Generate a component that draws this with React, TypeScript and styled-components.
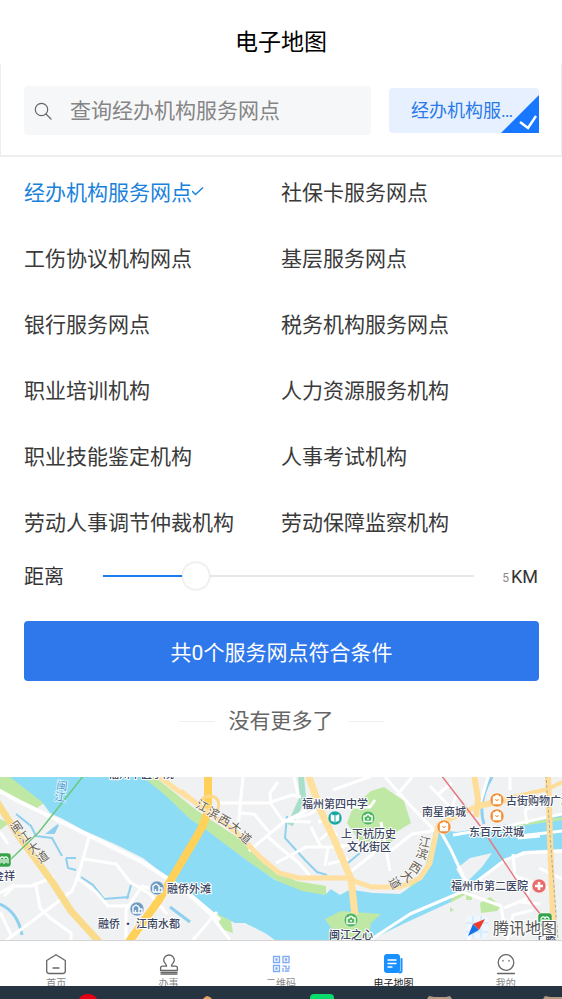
import React, { useState } from "react";
import styled, { createGlobalStyle } from "styled-components";

const GlobalStyle = createGlobalStyle`
  *, *::before, *::after { box-sizing: border-box; }
  body {
    margin: 0;
    background: #fff;
    color: #333;
    font-family: Roboto, "Noto Sans CJK SC", sans-serif;
  }
  button, input { font-family: inherit; }
`;

const Page = styled.div`
  display: flex;
  flex-direction: column;
  min-height: 100vh;
`;

const Title = styled.h1`
  margin: 0;
  padding-top: 21px;
  font-size: 23px;
  font-weight: 400;
  line-height: 43px;
  text-align: center;
  color: #000;
`;

const FilterBar = styled.form`
  display: flex;
  align-items: center;
  gap: 18px;
  padding: 22px 22px 20px 23px;
  border: solid #eee;
  border-width: 0 1px 2px;
`;

const SearchBox = styled.label`
  display: flex;
  flex: 1;
  align-items: center;
  gap: 18px;
  min-width: 0;
  padding: 0 10px;
  background: #f6f7f9;
  border-radius: 4px;
`;

const SearchInput = styled.input`
  flex: 1;
  min-width: 0;
  height: 49px;
  padding: 1px 0 0;
  border: 0;
  outline: 0;
  background: transparent;
  font-size: 21px;
  color: #333;
  &::placeholder { color: #858585; opacity: 1; }
`;

const TypeChip = styled.button`
  position: relative;
  width: 150px;
  height: 45px;
  padding: 0 22px;
  overflow: hidden;
  border: 0;
  border-radius: 4px 4px 0 4px;
  background: #e7f0fe;
  color: #2979e8;
  font-size: 18px;
  line-height: 45px;
  text-align: left;
`;

const ChipLabel = styled.span`
  display: block;
  overflow: hidden;
  white-space: nowrap;
  text-overflow: ellipsis;
`;

const ChipCorner = styled.svg`
  position: absolute;
  right: 0;
  bottom: 0;
  width: 38px;
  height: 38px;
`;

const TypeGrid = styled.div`
  display: grid;
  grid-template-columns: 1fr 1fr;
  padding: 1px 24px 1px;
`;

const TypeOption = styled.button<{ $active: boolean }>`
  display: flex;
  align-items: center;
  height: 66px;
  padding: 0;
  border: 0;
  background: none;
  font-size: 21px;
  white-space: nowrap;
  color: ${(p) => (p.$active ? "#1a82dc" : "#3a3a3a")};
`;

const DistanceRow = styled.div`
  display: flex;
  align-items: center;
  min-height: 42px;
  padding: 0 24px;
`;

const DistanceLabel = styled.label`
  flex: none;
  width: 79px;
  padding-bottom: 2px;
  font-size: 20px;
`;

const Track = styled.div`
  flex: 1;
  display: flex;
  height: 28px;
  background:
    linear-gradient(#1f7bed, #1f7bed) left center / var(--fill) 2px no-repeat,
    linear-gradient(#e8e8e8, #e8e8e8) center / 100% 2px no-repeat;
`;

const Range = styled.input`
  appearance: none;
  flex: 1;
  height: 28px;
  margin: 0 -14px;
  background: transparent;
  &::-webkit-slider-thumb {
    appearance: none;
    width: 28px;
    height: 28px;
    border: 1px solid #eee;
    border-radius: 50%;
    background: #fff;
    box-shadow: 0 0 2px rgba(0, 0, 0, 0.12);
  }
`;

const Distance = styled.output`
  flex: none;
  width: 64px;
  font-size: 18px;
  text-align: right;
`;

const DistanceValue = styled.span`
  margin-right: 2px;
  font-size: 12px;
  vertical-align: 1px;
  color: #888;
`;

const Submit = styled.button`
  height: 60px;
  margin: 24px 23px 0 24px;
  border: 0;
  border-radius: 4px;
  background: #2f78ec;
  color: #fff;
  font-size: 21px;
`;

const EndNote = styled.p`
  display: flex;
  align-items: center;
  justify-content: center;
  gap: 14px;
  margin: 0;
  padding: 20px 0 36px;
  font-size: 21px;
  line-height: 40px;
  color: #666;
  &::before, &::after {
    content: "";
    width: 36px;
    height: 1px;
    background: #f0f0f0;
  }
`;

const Map = styled.svg`
  display: block;
  width: 100%;
  height: 163px;
  font-family: "Noto Sans CJK SC", sans-serif;
`;

const TabBar = styled.nav`
  display: flex;
  height: 46px;
  overflow: hidden;
  border-top: 1px solid #d4d4d4;
  background: #fff;
`;

const Tab = styled.a<{ $active?: boolean }>`
  flex: 1;
  display: flex;
  flex-direction: column;
  align-items: center;
  padding-top: 13px;
  font-size: 10px;
  line-height: 16px;
  text-decoration: none;
  color: ${(p) => (p.$active ? "#222" : "#888")};
`;

const TabIcon = styled.svg`
  flex: none;
  width: 24px;
  height: 22px;
  fill: none;
  stroke: #666;
  stroke-width: 1.3;
  stroke-linejoin: round;
  stroke-linecap: round;
`;

const Dock = styled.svg`
  display: block;
  width: 100%;
  height: 13px;
  background: #263442;
`;

const types = [
  "经办机构服务网点", "社保卡服务网点",
  "工伤协议机构网点", "基层服务网点",
  "银行服务网点", "税务机构服务网点",
  "职业培训机构", "人力资源服务机构",
  "职业技能鉴定机构", "人事考试机构",
  "劳动人事调节仲裁机构", "劳动保障监察机构",
];

const tabs = [
  {
    name: "首页",
    icon: <><path d="M12 .7 21.300 6.500V17q0 2.500-2.500 2.500H5.200q-2.500 0-2.500-2.500V6.500Z" /><path d="M9 14h6" /></>,
  },
  {
    name: "办事",
    icon: <><path d="M9.600 12.200C9.600 9.800 6.700 9 6.700 6.300a5.300 5.300 0 0 1 10.600 0c0 2.700-2.900 3.500-2.900 5.900h4q2 0 2 2v2.300H3.600v-2.300q0-2 2-2Z" /><path d="M4 18.400h16M4 20h16" /></>,
  },
  {
    name: "二维码",
    icon: (
      <g stroke="#7ea9f3" strokeLinecap="butt" strokeLinejoin="miter">
        <path d="M4.500 2.500h6v6h-6zM14 2.500h6v6h-6zM4.500 11.500h6v6h-6zM7 5h1v1H7zM16.500 5h1v1h-1zM7 14h1v1H7z" />
        <path d="M13.500 12.200H17v2.600h3v-3.300M14 14v4M16.500 18v-1h3.800" />
      </g>
    ),
  },
  {
    name: "电子地图",
    icon: (
      <>
        <rect x="3" y="0" width="16" height="19" rx="3" fill="#1890ff" stroke="none" />
        <path d="M20.500 5v12q0 1.500-2 1.500" stroke="#1890ff" strokeWidth="2" />
        <path d="M7 6h8M7 9.500h8M7 13h4" stroke="#fff" strokeWidth="1.400" />
      </>
    ),
  },
  {
    name: "我的",
    icon: <><circle cx="12" cy="8.500" r="7.800" /><path d="M9 6.500v.6M15 6.500v.6M3.500 19.500h17" /></>,
  },
];

const glyphs = {
  bag: <path d="M-3.500-3h7v6.500h-7ZM-1.500-.5Q0 1.500 1.500-.5M-1.500-3q0-1.500 1.500-1.500t1.500 1.500" fill="#fff" />,
  building: <path d="M-4 4v-6l3-2 3 2v6M2 0h3v4h-9M-1.500 4V1" />,
  book: <path d="M0 4-4 2.500v-6L0-2l4-1.500v6Z" fill="#fff" strokeWidth="0.500" />,
  camera: <path d="M-4-2h2l1-1.500h2L2-2h2v5.500h-8ZM-1 .7h2" />,
  cross: <path d="M-4 0h8M0-4v8" strokeWidth="2.600" />,
  tree: <path d="M-4 3.500v-5q2-3 4-.5 2-2.500 4 .5v5M0-2v6M-2-1v4M2-1v4" strokeWidth="1.200" />,
};

const pois: { x: number; y: number; color: string; glyph: keyof typeof glyphs; square?: boolean }[] = [
  { x: 4, y: 83, color: "#35a34a", glyph: "tree", square: true },
  { x: 157, y: 111, color: "#6d9bc1", glyph: "building" },
  { x: 137, y: 132, color: "#6d9bc1", glyph: "building" },
  { x: 335, y: 41, color: "#18a6a4", glyph: "book" },
  { x: 368, y: 41, color: "#4fb85e", glyph: "camera" },
  { x: 351, y: 143, color: "#4fb85e", glyph: "camera" },
  { x: 497, y: 23, color: "#f18d35", glyph: "bag" },
  { x: 497, y: 39, color: "#f18d35", glyph: "bag" },
  { x: 444, y: 50, color: "#f18d35", glyph: "bag" },
  { x: 539, y: 109, color: "#e96a6a", glyph: "cross" },
  { x: 545, y: 143, color: "#35a34a", glyph: "tree", square: true },
];

const places = [
  { text: "福州中医学院", x: 108, y: 1 },
  { text: "融侨外滩", x: 167, y: 116 },
  { text: "融侨 · 江南水都", x: 98, y: 151 },
  { text: "金祥", x: -7, y: 103 },
  { text: "福州第四中学", x: 302, y: 31 },
  { text: "上下杭历史", x: 341, y: 61 },
  { text: "文化街区", x: 347, y: 74 },
  { text: "闽江之心", x: 329, y: 162 },
  { text: "南星商城", x: 422, y: 39 },
  { text: "古街购物广场", x: 506, y: 28 },
  { text: "东百元洪城", x: 469, y: 59 },
  { text: "福州市第二医院", x: 451, y: 113 },
  { text: "上藤", x: 534, y: 165 },
];

const roadNames = [
  { text: "闽江大道", x: "14 22 31 40", y: "57 67 78 87", rotate: "-35 -35 -35 -35" },
  { text: "江滨西大道", x: "195 206 217 228 238", y: "30 37 44 50 60", rotate: "28 28 30 38 40" },
  { text: "江滨西大道", x: "418 415 408 400 388", y: "68 79 91 98 103", rotate: "12 18 32 45 60" },
];

function CityMap() {
  return (
    <Map viewBox="0 0 562 163" preserveAspectRatio="xMidYMid slice" role="img" aria-label="福州地图">
      <rect width="562" height="163" fill="#f0f1f2" />
      <g fill="#bfe8a4">
        <path d="M0 0h14l30 26-7 5L0 13ZM0 42l9 4-9 7Z" />
        <path d="M143 0 190 42l30 22 36 26 38 25 32 3v-9l-30-5-32-17-24-25-38-25L190 28 155 0Z" />
        <path d="m371 14 13-4 20 14 7 22-18 11 2 4-13 13-20-6-15-22 6-16Z" />
        <path d="m435 52 9 4-8 38-18 18-14 3 20-20Z" />
        <path d="m211 132 20 12 2 12-9-3Z" />
      </g>
      <path
        fill="#8cdcf5"
        d="M10 0h133l22 18 25 24 15 10 40 30 30 21 27 11 23 4 8-8 40 6 27 1 17-11 13-16 4-38 23 3 46-7 59-10v34l-39 2-20 10-33 24-17 16-50 23-33 16H275l-10-7-20-10h-10l-25-13-25-20-18-13-24-19-26-13-34-15-20-11-13-6-8-11Z"
      />
      <path fill="#bfe8a4" d="m325 142 16-8 40 3-10 9-3 17h-28Z" />
      <path fill="#bfe8a4" d="m480 126 10-6 11 9-4 5-16 2ZM466 117h6v6h-6ZM450 130l4 3-4 2ZM452 121l22-12v4l-24 13ZM500 50l62-10v3l-62 9Z" />
      <path fill="#f0f1f2" d="m456 92 14-11 22-5-10 14-17 17Z" />
      <path fill="#f0f1f2" d="m326 109 22-5 3 8-11 6Z" />

      <g fill="none" stroke="#8ed0ee" strokeWidth="2">
        <path d="m16 37 15 12 5 10 16 2 10 18M66 81h10M66 81l2 10 8 2M81 100l12 8 11 14 25-2" />
        <path d="m48 56 10-8-4 8Z" fill="#8ed0ee" />
        <path d="M0 127q18 8 22 31M170 130l20 15M492 0q-15 25-8 47" strokeWidth="3" />
        <path d="m127 122 4-14M287 39l-2 22 20 22 12 12 10 3M360 76l-12 10" />
        <path d="m301 0 2 20-13 28" stroke="#a7dfca" strokeWidth="6" />
      </g>

      <g fill="none" stroke="#fff" strokeWidth="3" strokeLinejoin="round">
        <path d="M-2 13 20 25l50 24 46 23 28 14 38 25 38 32" strokeWidth="4" />
        <path d="m89 60-6 22-6 20-5 12-45 34-27 20M76 100l20 15 12 14h18l10-3M84 82l32 5 14 18 20 12 17 20M126 163v-30l16-24 25 8" />
        <path d="M54 100 31 109H14L4 119M14 108 0 116M36 109l4 22 10 10M50 141l21 15v8M0 135l12 25M0 55l8 12" />
        <path d="M183 113l27 24 20 26M217 135l-24 28" />
        <path d="m243 0-3 30-2 22M218 26h50l24-8 9 2M278 5l-8 11 1 11 12 17 27-7 12-9M238 36l16 1 5 6 10 12M249 74l36-30 22-11M267 59l16 14 15 12 12 14M276 86l30-16h38M283 44l28 1M294 0l4 18M311 50l10 20M320 63l12-11 5 7M325 89l3-19M328 87l20-5M340 69l36-3M350 95l23-18 8-17" />
        <path d="M342 22v8h28l5-7M318 45l24-5M333 13l36-13 10-8M385 0l24 27 24 25M397 18l15-18M378 73h14l20-16 26-4M381 45l9 49M430 9l20 21M437 18l15-12M450 40l6-22M488 0l-8 27M540 59l-22 2M510 13V0M527 47l-2-14 30-13" />
        <path d="m370 163 40-26 54-23 41-31 20-7 37-2M463 115l38 14 3 18M441 55l10 18 13 28 12 14M513 77l2 22 33 12M504 131l22-9 5-17M507 163l6-25 20-5M539 91l23 11" />
        <path d="M520 59l42-5M458 38l-13 8M453 58l54-9 55-12M520 125l20 2M468 163l12-16" />
      </g>

      <g fill="none" strokeLinejoin="round">
        <path d="m-3 25 21 33 35 48 18 28 30 33" stroke="#f9db8a" strokeWidth="7" />
        <path d="M208-3v30q0 14-11 32l-38 64-31 43" stroke="#ffd159" strokeWidth="8" />
        <path d="M203 33q-8-10 5-14 15 0 9 17" stroke="#ffd98a" strokeWidth="3" />
        <path d="m157-2 20 15 22 15M181 14l21 17 34 24 24 25 19 16 20 5h47l25 9h29l20-9 10-15 8-38 35-17 40-9" stroke="#ffe0a0" strokeWidth="5" />
        <path d="m308-3 12 35 14 30 17 40 4 36" stroke="#ffe09c" strokeWidth="7" />
        <path d="m474-3 4 25-2 18M548-3l2 65 4 102" stroke="#ffdd98" strokeWidth="6" />
        <path d="m478 28 70-16 14-7" stroke="#ffdd98" strokeWidth="4" />
      </g>
      <path d="M84-2 39 55 9 84" fill="none" stroke="#6bc77b" strokeWidth="1.500" />
      <path d="m441-2 40 52 52 78 12 15" fill="none" stroke="#e77880" strokeWidth="1.500" />
      <path d="m546-2 4 60 8 105" fill="none" stroke="#aaa" strokeDasharray="3 2" />

      <text x="56 54" y="12 23" rotate="8 8" fontSize="11" fill="#529cc8" stroke="#d9f4ff" strokeWidth="2" paintOrder="stroke">闽江</text>
      {roadNames.map((road) => (
        <text
          key={road.x}
          x={road.x}
          y={road.y}
          rotate={road.rotate}
          fontSize="12"
          fill="#665c50"
          stroke="#fff"
          strokeWidth="1"
          paintOrder="stroke"
        >
          {road.text}
        </text>
      ))}
      {pois.map((poi) => (
        <g key={`${poi.x}-${poi.y}`} transform={`translate(${poi.x} ${poi.y})`}>
          <rect x="-7" y="-7" width="14" height="14" rx={poi.square ? 3 : 7} fill={poi.color} stroke="#fff" strokeWidth="0.500" />
          <g fill="none" stroke="#fff" strokeWidth="1.400" strokeLinejoin="round">{glyphs[poi.glyph]}</g>
          {poi.glyph === "bag" && <path d="M-1.800-.5Q0 1.800 1.800-.5" fill="none" stroke={poi.color} />}
          {poi.glyph === "book" && <path d="M0-2v6" stroke={poi.color} />}
        </g>
      ))}
      <g fontSize="11" fontWeight="500" fill="#3c4662" stroke="#fff" strokeWidth="2" strokeLinejoin="round">
        {places.map((place) => (
          <text key={place.text} x={place.x} y={place.y} paintOrder="stroke">{place.text}</text>
        ))}
      </g>
      <g transform="translate(477 150)">
        <rect x="-11" y="-11" width="22" height="22" rx="4" fill="#eef6ff" />
        <path d="M-11-4h22M-4-11v22M4-11v22M-11 5h22" stroke="#d9ecfc" strokeWidth="2" />
        <path d="m8-8-12 5L2 3Z" fill="#ef3b2c" />
        <path d="m-9 9 5-12L2 3Z" fill="#1572e8" />
      </g>
      <text x="493" y="157" fontSize="16" fill="#555" stroke="#fff" strokeWidth="2" paintOrder="stroke">腾讯地图</text>
    </Map>
  );
}

export default function App() {
  const [selected, setSelected] = useState(types[0]);
  const [distance, setDistance] = useState(5);
  return (
    <>
      <GlobalStyle />
      <Page>
        <Title>电子地图</Title>
        <FilterBar onSubmit={(e) => e.preventDefault()}>
          <SearchBox>
            <svg width="18" height="18" viewBox="0 0 18 18" fill="none" stroke="#666" strokeWidth="1.200" strokeLinecap="round" aria-hidden="true">
              <circle cx="7.500" cy="7.500" r="6.200" />
              <path d="m12 12 5 5" />
            </svg>
            <SearchInput type="text" placeholder="查询经办机构服务网点" aria-label="查询服务网点" />
          </SearchBox>
          <TypeChip type="button">
            <ChipLabel>{selected}</ChipLabel>
            <ChipCorner viewBox="0 0 38 38" aria-hidden="true">
              <path d="M38 0v38H0Z" fill="#1777ff" />
              <path d="m19 27 8 6 8-12" fill="none" stroke="#fff" strokeWidth="2.400" />
            </ChipCorner>
          </TypeChip>
        </FilterBar>
        <TypeGrid>
          {types.map((type) => (
            <TypeOption key={type} type="button" $active={type === selected} onClick={() => setSelected(type)}>
              {type}
              {type === selected && (
                <svg width="12" height="14" viewBox="0 0 12 14" fill="none" stroke="currentColor" strokeWidth="1.500" aria-hidden="true">
                  <path d="m0 7 3.500 3.500L11 3.500" />
                </svg>
              )}
            </TypeOption>
          ))}
        </TypeGrid>
        <DistanceRow>
          <DistanceLabel htmlFor="distance">距离</DistanceLabel>
          <Track style={{ "--fill": `${(distance / 20) * 100}%` } as React.CSSProperties}>
            <Range id="distance" type="range" min="0" max="20" value={distance} onChange={(e) => setDistance(Number(e.target.value))} />
          </Track>
          <Distance htmlFor="distance">
            <DistanceValue>{distance}</DistanceValue>KM
          </Distance>
        </DistanceRow>
        <Submit type="button">共0个服务网点符合条件</Submit>
        <EndNote>没有更多了</EndNote>
        <CityMap />
        <TabBar>
          {tabs.map((tab) => (
            <Tab key={tab.name} href="#" $active={tab.name === "电子地图"}>
              <TabIcon viewBox="0 0 24 22" aria-hidden="true">{tab.icon}</TabIcon>
              {tab.name}
            </Tab>
          ))}
        </TabBar>
        <Dock viewBox="0 0 562 13" preserveAspectRatio="xMidYMin slice" aria-hidden="true">
          <circle cx="88" cy="19" r="11" fill="#e60012" />
          <path d="m203 13 2-2 2-1 3 1 2 2Z" fill="#e6a15c" />
          <rect x="310" y="8" width="24" height="20" rx="4" fill="#07dc6b" />
          <path d="m427 13 2-3 5 1h12l4-1 2 3ZM543 13l2-3 5 1h12v2Z" fill="#b39a82" />
        </Dock>
      </Page>
    </>
  );
}
